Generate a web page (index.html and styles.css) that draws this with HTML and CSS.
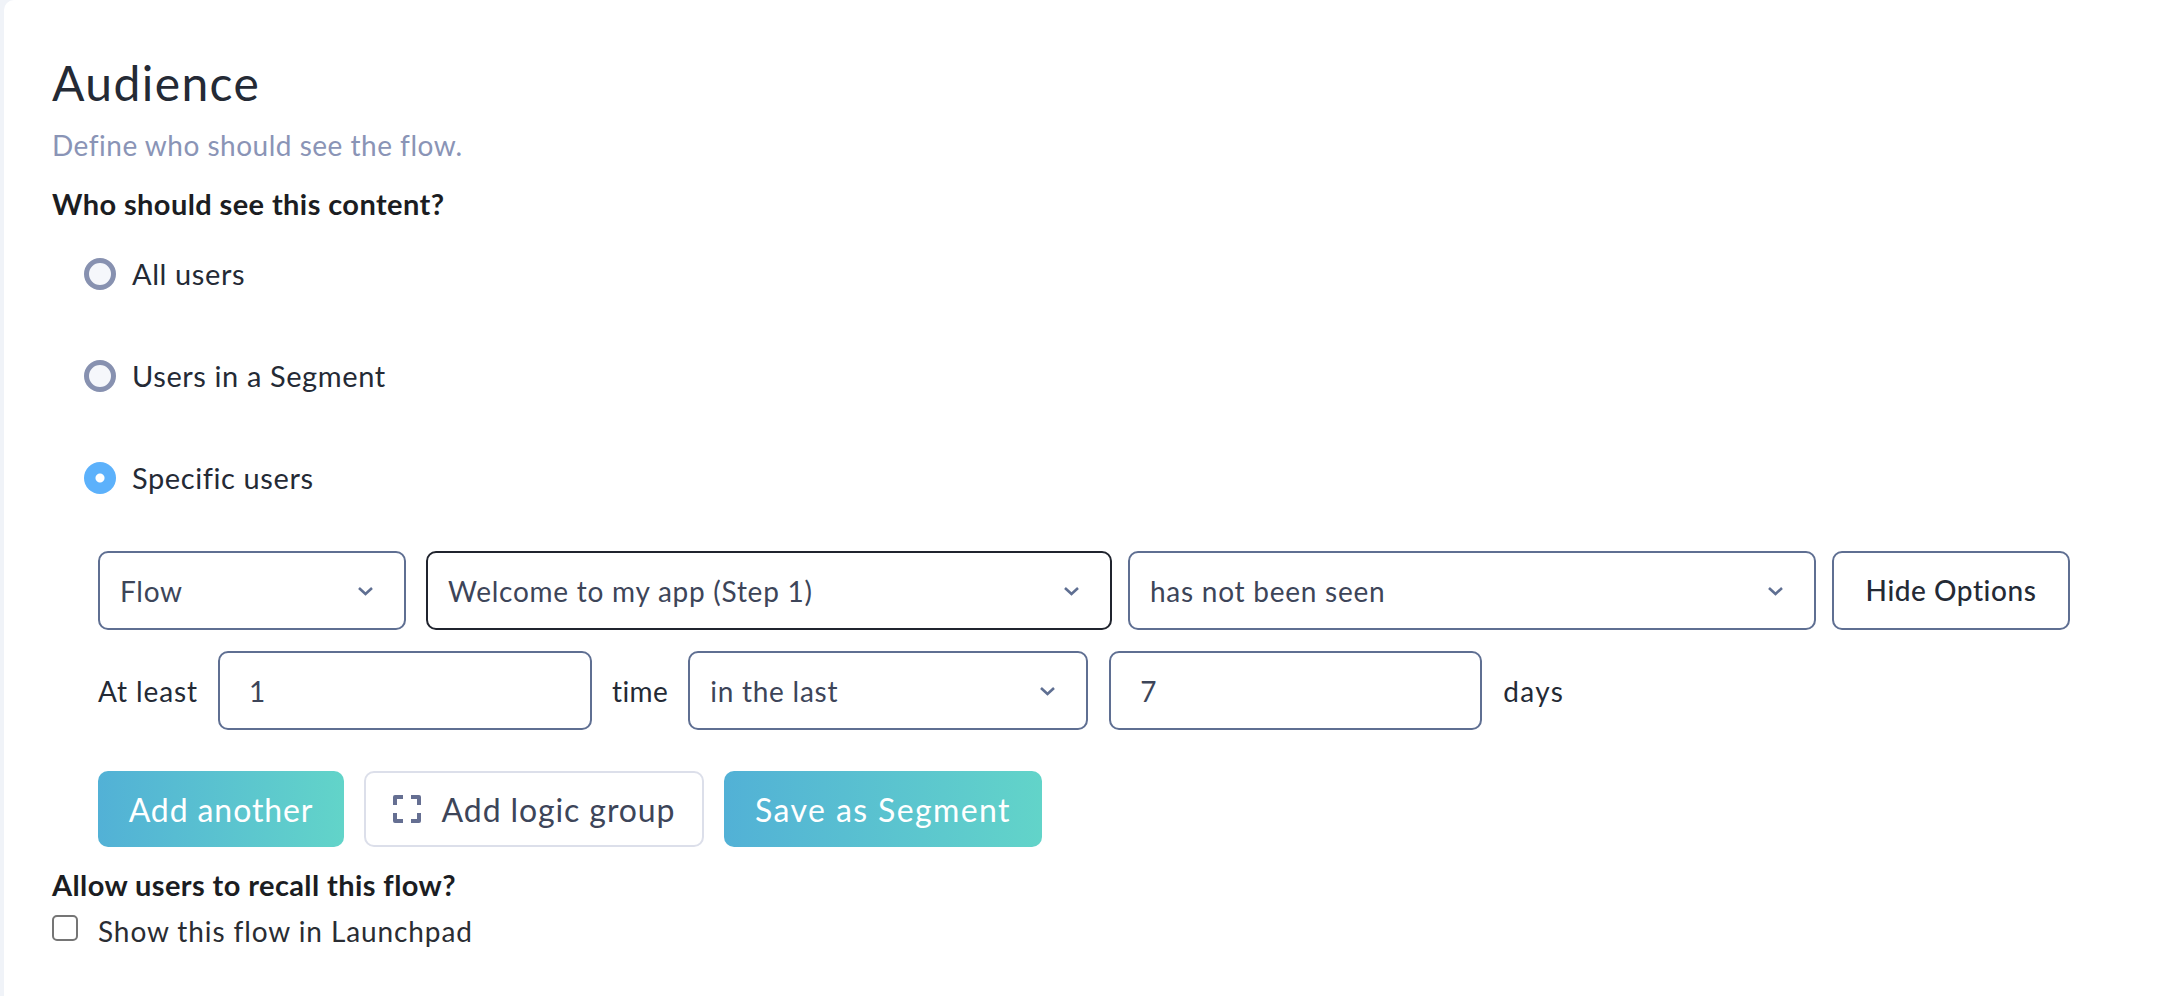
FILE: index.html
```html
<!DOCTYPE html>
<html lang="en">

<head>
    <meta charset="UTF-8">
    <title>Audience</title>
    <link rel="stylesheet" href="styles.css">
</head>

<body>
    <div class="card">
        <h1 class="title">Audience</h1>
        <p class="subtitle">Define who should see the flow.</p>
        <p class="question">Who should see this content?</p>

        <div class="radio-list">
            <label class="radio-row"><span class="radio"></span><span class="radio-text">All users</span></label>
            <label class="radio-row"><span class="radio"></span><span class="radio-text">Users in a Segment</span></label>
            <label class="radio-row"><span class="radio checked"></span><span class="radio-text">Specific users</span></label>
        </div>

        <div class="rule">
            <div class="rule-row">
                <div class="select select-type">Flow
                    <svg class="chevron" viewBox="0 0 17 10"><path d="M2 2l6.500 6 6.500-6"/></svg>
                </div>
                <div class="select select-flow focused">Welcome to my app (Step 1)
                    <svg class="chevron" viewBox="0 0 17 10"><path d="M2 2l6.500 6 6.500-6"/></svg>
                </div>
                <div class="select select-state">has not been seen
                    <svg class="chevron" viewBox="0 0 17 10"><path d="M2 2l6.500 6 6.500-6"/></svg>
                </div>
                <button class="btn-hide">Hide Options</button>
            </div>
            <div class="rule-row options-row">
                <span class="word">At least</span>
                <input class="count" value="1">
                <span class="word word-time">time</span>
                <div class="select select-range">in the last
                    <svg class="chevron" viewBox="0 0 17 10"><path d="M2 2l6.500 6 6.500-6"/></svg>
                </div>
                <input class="count count-days" value="7">
                <span class="word word-days">days</span>
            </div>
            <div class="actions">
                <button class="btn btn-green btn-add">Add another</button>
                <button class="btn btn-plain">
                    <svg class="group-icon" viewBox="0 0 28 28"><path d="M2 10V2h8M18 2h8v8M26 18v8h-8M10 26H2v-8"/></svg>
                    Add logic group
                </button>
                <button class="btn btn-green btn-save">Save as Segment</button>
            </div>
        </div>

        <p class="question question-recall">Allow users to recall this flow?</p>
        <label class="check-row"><span class="checkbox"></span>Show this flow in Launchpad</label>
    </div>
</body>

</html>
```

FILE: styles.css
```css
* {
    padding: 0;
    margin: 0;
    box-sizing: border-box;
}

body {
    background: #f0f3f8;
    font-family: "Lato", "Open Sans", sans-serif;
    color: #242a35;
    height: 996px;
    overflow: hidden;
}

.card {
    margin-left: 4px;
    height: 996px;
    background: #fff;
    border-top-left-radius: 10px;
    padding: 54px 0 0 48px;
}

.title {
    font-size: 48px;
    font-weight: 400;
    line-height: 58px;
    letter-spacing: 1.4px;
}

.subtitle {
    margin-top: 16px;
    font-size: 28px;
    line-height: 34px;
    color: #8a94b6;
    letter-spacing: 0.5px;
}

.question {
    margin-top: 25px;
    font-size: 29px;
    font-weight: 700;
    line-height: 34px;
    color: #1b1d22;
    letter-spacing: 0.4px;
}

.radio-list {
    margin-top: 37px;
    padding-left: 32px;
}

.radio-row {
    display: flex;
    align-items: center;
    gap: 16px;
    height: 32px;
    margin-bottom: 70px;
    font-size: 29px;
    letter-spacing: 0.6px;
}

.radio-text {
    margin-bottom: 2px;
}

.radio {
    width: 32px;
    height: 32px;
    border-radius: 50%;
    border: 5px solid #8791b0;
    background: #f5f7fb;
}

.radio.checked {
    border: 0;
    background: radial-gradient(circle, #fff 0 4px, #5cb1fb 5px);
}

.rule {
    margin-top: -13px;
    padding-left: 46px;
}

.rule-row {
    display: flex;
    align-items: center;
    height: 79px;
}

.options-row {
    margin-top: 21px;
}

.select {
    display: flex;
    align-items: center;
    justify-content: space-between;
    height: 79px;
    padding: 0 30px 0 20px;
    border: 2px solid #5f6f92;
    border-radius: 10px;
    font-size: 28px;
    color: #3d4559;
    letter-spacing: 0.75px;
}

.select.focused {
    border-color: #20242e;
}

.select-type {
    width: 308px;
}

.select-flow {
    width: 686px;
    margin-left: 20px;
}

.select-state {
    width: 688px;
    margin-left: 16px;
}

.select-range {
    width: 400px;
}

.chevron {
    width: 17px;
    height: 10px;
    fill: none;
    stroke: #5f6f92;
    stroke-width: 2.6;
}

.btn-hide {
    width: 238px;
    height: 79px;
    margin-left: 16px;
    padding-bottom: 2px;
    background: #fff;
    border: 2px solid #5f6f92;
    border-radius: 10px;
    font-family: inherit;
    font-size: 28px;
    font-weight: 500;
    color: #242a35;
    letter-spacing: 0.55px;
}

.word {
    font-size: 28px;
    letter-spacing: 0.9px;
}

.count {
    width: 374px;
    height: 79px;
    margin-left: 20px;
    padding-left: 29px;
    border: 2px solid #5f6f92;
    border-radius: 10px;
    font-family: inherit;
    font-size: 28px;
    color: #3d4559;
}

.word-time {
    margin: 0 20px 0 20px;
    letter-spacing: 0.4px;
}

.count-days {
    width: 373px;
    margin-left: 21px;
    padding-left: 29px;
}

.word-days {
    margin-left: 21px;
    letter-spacing: 1.4px;
}

.actions {
    display: flex;
    gap: 20px;
    margin-top: 41px;
}

.btn {
    display: flex;
    align-items: center;
    justify-content: center;
    height: 76px;
    border-radius: 10px;
    border: 0;
    font-family: inherit;
    font-size: 32px;
    letter-spacing: 0.9px;
}

.btn-green {
    background: linear-gradient(90deg, #52b1d6, #62d4c9);
    color: #fff;
}

.btn-add {
    width: 246px;
}

.btn-save {
    width: 318px;
    letter-spacing: 1.4px;
}

.btn-plain {
    width: 340px;
    gap: 21px;
    background: #fff;
    border: 2px solid #dcdfea;
    color: #3d4559;
}

.group-icon {
    width: 28px;
    height: 28px;
    fill: none;
    stroke: #656f92;
    stroke-width: 4;
    stroke-linejoin: round;
}

.question-recall {
    margin-top: 21px;
}

.check-row {
    display: flex;
    align-items: center;
    gap: 20px;
    margin-top: 12px;
    font-size: 28px;
    letter-spacing: 0.9px;
    color: #2a2d33;
}

.checkbox {
    width: 26px;
    height: 26px;
    margin-bottom: 6px;
    border: 2px solid #757575;
    border-radius: 5px;
    background: #fff;
}
```
